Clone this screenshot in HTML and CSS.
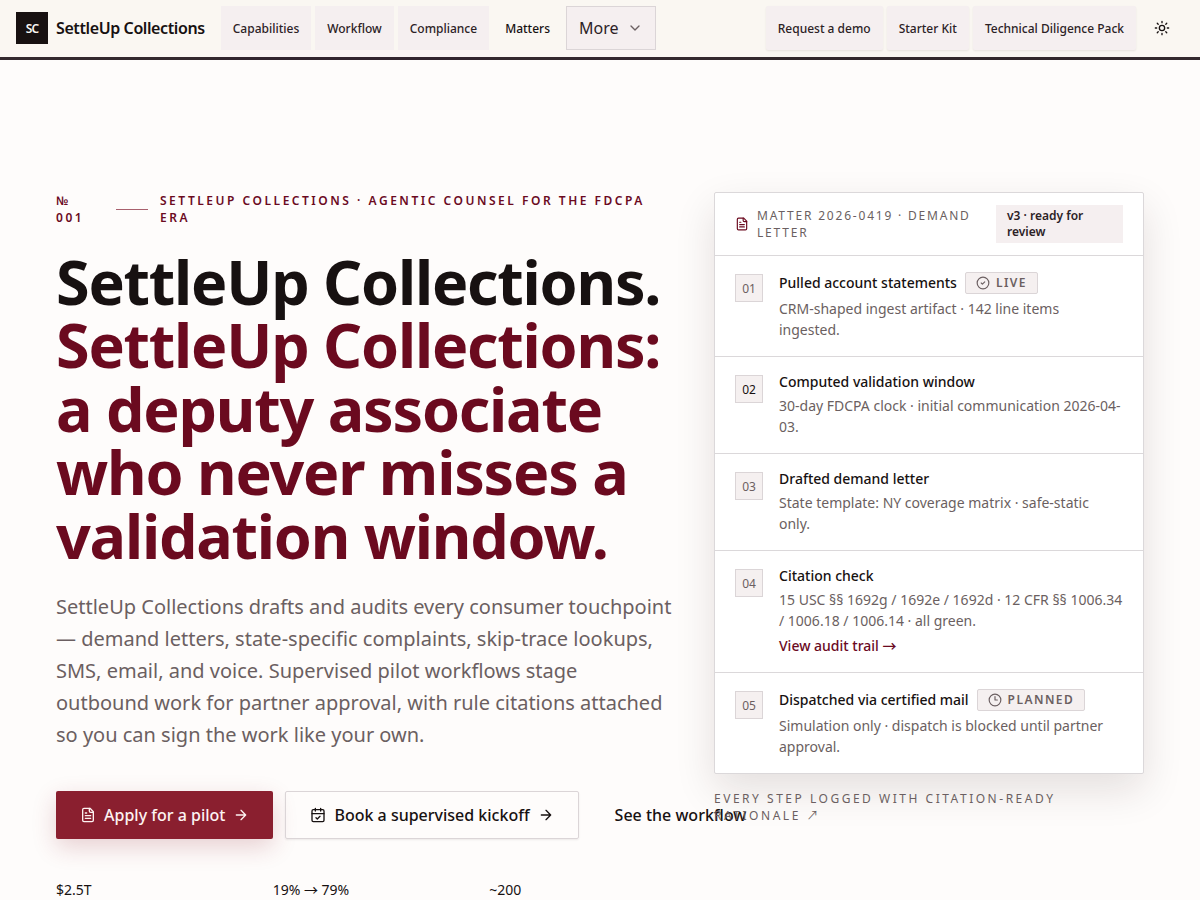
FILE: index.html
```html
<!DOCTYPE html>
<html lang="en">
<head>
  <meta charset="UTF-8" />
  <meta name="viewport" content="width=device-width, initial-scale=1.0" />
  <title>SettleUp Collections</title>
  <link rel="stylesheet" href="styles.css">
</head>
<body>
  <header class="site-header">
    <a href="#" class="brand">
      <span class="brand-mark">SC</span>
      <span class="brand-name">SettleUp Collections</span>
    </a>
    <nav class="main-nav">
      <a href="#" class="nav-link filled">Capabilities</a>
      <a href="#" class="nav-link filled">Workflow</a>
      <a href="#" class="nav-link filled">Compliance</a>
      <a href="#" class="nav-link">Matters</a>
      <button type="button" class="more-btn">More
        <svg class="icon chevron" viewBox="0 0 24 24"><path d="m6 9 6 6 6-6"/></svg>
      </button>
    </nav>
    <div class="header-actions">
      <a href="#" class="action-link">Request a demo</a>
      <a href="#" class="action-link">Starter Kit</a>
      <a href="#" class="action-link">Technical Diligence Pack</a>
      <button type="button" class="theme-btn" aria-label="Toggle theme">
        <svg class="icon" viewBox="0 0 24 24"><circle cx="12" cy="12" r="4"/><path d="M12 2v2M12 20v2M4.9 4.9l1.4 1.4M17.7 17.7l1.4 1.4M2 12h2M20 12h2M6.3 17.7l-1.4 1.4M19.1 4.9l-1.4 1.4"/></svg>
      </button>
    </div>
  </header>

  <main class="hero">
    <section class="hero-copy">
      <div class="eyebrow">
        <span>№ 001</span>
        <span class="eyebrow-line"></span>
        <span>SettleUp Collections · Agentic counsel for the FDCPA era</span>
      </div>
      <h1>SettleUp Collections. <span class="accent">SettleUp Collections: a deputy associate who never misses a validation window.</span></h1>
      <p class="lead">SettleUp Collections drafts and audits every consumer touchpoint — demand letters, state-specific complaints, skip-trace lookups, SMS, email, and voice. Supervised pilot workflows stage outbound work for partner approval, with rule citations attached so you can sign the work like your own.</p>
      <div class="cta-row">
        <a href="#" class="btn btn-primary">
          <svg class="icon" viewBox="0 0 24 24"><path d="M15 2H6a2 2 0 0 0-2 2v16a2 2 0 0 0 2 2h12a2 2 0 0 0 2-2V7Z"/><path d="M14 2v4a2 2 0 0 0 2 2h4M10 9H8M16 13H8M16 17H8"/></svg>
          Apply for a pilot
          <svg class="icon" viewBox="0 0 24 24"><path d="M5 12h14M12 5l7 7-7 7"/></svg>
        </a>
        <a href="#" class="btn btn-outline">
          <svg class="icon" viewBox="0 0 24 24"><path d="M8 2v4M16 2v4M3 10h18M9 16l2 2 4-4"/><rect x="3" y="4" width="18" height="18" rx="2"/></svg>
          Book a supervised kickoff
          <svg class="icon" viewBox="0 0 24 24"><path d="M5 12h14M12 5l7 7-7 7"/></svg>
        </a>
        <a href="#" class="btn btn-ghost">See the workflow</a>
      </div>
      <div class="stats">
        <span>$2.5T</span>
        <span>19% <span class="arrow">→</span> 79%</span>
        <span>~200</span>
      </div>
    </section>

    <aside class="matter">
      <div class="matter-card">
        <div class="matter-head">
          <svg class="icon" viewBox="0 0 24 24"><path d="M15 2H6a2 2 0 0 0-2 2v16a2 2 0 0 0 2 2h12a2 2 0 0 0 2-2V7Z"/><path d="M14 2v4a2 2 0 0 0 2 2h4M10 9H8M16 13H8M16 17H8"/></svg>
          <span class="matter-title">Matter 2026-0419 · Demand letter</span>
          <span class="version">v3 · ready for review</span>
        </div>
        <ol class="steps">
          <li class="step">
            <span class="step-no">01</span>
            <div class="step-body">
              <div class="step-title">Pulled account statements
                <span class="tag"><svg class="icon" viewBox="0 0 24 24"><circle cx="12" cy="12" r="10"/><path d="m9 12 2 2 4-4"/></svg>Live</span>
              </div>
              <p>CRM-shaped ingest artifact · 142 line items ingested.</p>
            </div>
          </li>
          <li class="step">
            <span class="step-no current">02</span>
            <div class="step-body">
              <div class="step-title">Computed validation window</div>
              <p>30-day FDCPA clock · initial communication 2026-04-03.</p>
            </div>
          </li>
          <li class="step">
            <span class="step-no">03</span>
            <div class="step-body">
              <div class="step-title">Drafted demand letter</div>
              <p>State template: NY coverage matrix · safe-static only.</p>
            </div>
          </li>
          <li class="step">
            <span class="step-no">04</span>
            <div class="step-body">
              <div class="step-title">Citation check</div>
              <p>15 USC §§ 1692g / 1692e / 1692d · 12 CFR §§ 1006.34 / 1006.18 / 1006.14 · all green.</p>
              <a href="#" class="audit-link">View audit trail <span class="arrow">→</span></a>
            </div>
          </li>
          <li class="step">
            <span class="step-no">05</span>
            <div class="step-body">
              <div class="step-title">Dispatched via certified mail
                <span class="tag"><svg class="icon" viewBox="0 0 24 24"><circle cx="12" cy="12" r="10"/><path d="M12 6v6h4"/></svg>Planned</span>
              </div>
              <p>Simulation only · dispatch is blocked until partner approval.</p>
            </div>
          </li>
        </ol>
      </div>
      <p class="matter-note">Every step logged with citation-ready rationale <span class="arrow">↗</span></p>
    </aside>
  </main>
</body>
</html>
```
FILE: styles.css
```css
* { margin: 0; padding: 0; box-sizing: border-box; }
body {
  background: #fefcfb;
  color: #171111;
  font-family: "Noto Sans", sans-serif;
  font-size: 14px;
}
a { color: inherit; text-decoration: none; }
button { font-family: inherit; color: inherit; cursor: pointer; }
.icon {
  width: 16px;
  height: 16px;
  flex: none;
  fill: none;
  stroke: currentColor;
  stroke-width: 2;
  stroke-linecap: round;
  stroke-linejoin: round;
}
.arrow { font-family: "Noto Sans CJK JP", sans-serif; line-height: 1; }

/* header */
.site-header {
  display: flex;
  align-items: center;
  padding: 6px 16px 7px;
  background: #faf7f2;
  border-bottom: 3px solid #33292d;
  white-space: nowrap;
}
.brand {
  display: flex;
  align-items: center;
  gap: 8px;
  margin-right: 16px;
}
.brand-mark {
  display: grid;
  place-items: center;
  width: 32px;
  height: 32px;
  background: #171111;
  color: #faf7f2;
  font-size: 12px;
  font-weight: 600;
  letter-spacing: -1px;
}
.brand-name {
  font-size: 16px;
  font-weight: 600;
  letter-spacing: -0.025em;
}
.main-nav {
  display: flex;
  gap: 4px;
}
.nav-link, .action-link {
  display: flex;
  align-items: center;
  height: 44px;
  padding: 0 12px;
  font-size: 12px;
  font-weight: 500;
}
.nav-link.filled { background: #f5eff0; color: #2c2226; }
.more-btn {
  display: flex;
  align-items: center;
  gap: 8px;
  height: 44px;
  padding: 0 12px;
  border: 1px solid #dbd5d7;
  background: #f5eff0;
  color: #2c2226;
  font-size: 16px;
}
.chevron { color: #6b6062; }
.header-actions {
  display: flex;
  align-items: center;
  gap: 4px;
  margin-left: auto;
}
.action-link {
  border-radius: 2px;
  background: #f5eff0;
  color: #2c2226;
  box-shadow: 0 1px 2px rgba(23, 17, 17, 0.08);
}
.theme-btn {
  display: grid;
  place-items: center;
  width: 44px;
  height: 44px;
  border: none;
  background: none;
}

/* hero */
.hero {
  display: grid;
  grid-template-columns: minmax(0, 1fr) 430px;
  gap: 40px;
  align-items: start;
  padding: 132px 56px 0;
}
.eyebrow {
  display: flex;
  align-items: center;
  gap: 12px;
  color: #6b0a1f;
  font-size: 12px;
  font-weight: 600;
  line-height: 17px;
  letter-spacing: 0.21em;
  text-transform: uppercase;
}
.eyebrow-line {
  flex: 0 0 32px;
  height: 1px;
  background: #a8606d;
}
h1 {
  margin: 24px 0;
  font-size: 61px;
  font-weight: 700;
  line-height: 1.04;
  letter-spacing: -0.02em;
}
.accent { color: #6b0a1f; }
.lead {
  color: #6b5f61;
  font-size: 20px;
  line-height: 32px;
}
.cta-row {
  display: flex;
  gap: 12px;
  margin: 40px 0;
}
.btn {
  display: flex;
  flex: none;
  align-items: center;
  gap: 8px;
  height: 48px;
  padding: 0 24px;
  border-radius: 2px;
  font-size: 16px;
  font-weight: 500;
  white-space: nowrap;
}
.btn-primary {
  background: #8a1f2f;
  color: #fdf3f2;
  box-shadow: 0 8px 24px rgba(138, 31, 47, 0.2);
}
.btn-outline {
  border: 1px solid #dbd5d7;
  box-shadow: 0 1px 2px rgba(23, 17, 17, 0.08);
}
.stats {
  display: grid;
  grid-template-columns: repeat(3, 1fr);
  gap: 32px;
  line-height: 21px;
}

/* matter card */
.matter-card {
  border: 1px solid #dbd8da;
  border-radius: 2px;
  background: #fff;
  box-shadow: 0 16px 40px rgba(43, 20, 20, 0.12);
}
.matter-head {
  display: flex;
  align-items: center;
  gap: 8px;
  padding: 12px 20px;
  color: #6b5f61;
  font-size: 12px;
}
.matter-head .icon {
  width: 14px;
  height: 14px;
  color: #6b0a1f;
}
.matter-title {
  flex: 1;
  line-height: 17px;
  letter-spacing: 0.15em;
  text-transform: uppercase;
}
.version {
  flex: 0 0 127px;
  padding: 3px 11px;
  background: #f5eff0;
  color: #2c2226;
  font-weight: 600;
  line-height: 16px;
}
.steps { list-style: none; }
.step {
  display: flex;
  gap: 16px;
  padding: 16px 20px;
  border-top: 1px solid #dbd8da;
}
.step-no {
  display: grid;
  place-items: center;
  flex: none;
  width: 28px;
  height: 28px;
  margin-top: 2px;
  border: 1px solid #dbd5d7;
  background: #f5f0f0;
  color: #6b5f61;
  font-size: 12px;
}
.step-no.current { color: #171111; }
.step-title {
  display: flex;
  align-items: center;
  gap: 8px;
  margin-bottom: 4px;
  font-weight: 500;
  line-height: 18px;
}
.tag {
  display: flex;
  align-items: center;
  gap: 6px;
  height: 22px;
  padding: 0 10px;
  border: 1px solid #dbd5d7;
  border-radius: 2px;
  background: #f5f0f0;
  color: #6b5f61;
  font-size: 12px;
  font-weight: 600;
  letter-spacing: 0.12em;
  text-transform: uppercase;
}
.tag .icon { width: 14px; height: 14px; }
.step p {
  color: #6b5f61;
  line-height: 21px;
}
.audit-link {
  display: block;
  margin-top: 4px;
  color: #6b0a1f;
  font-weight: 500;
  line-height: 21px;
}
.matter-note {
  margin-top: 16px;
  color: #6b5f61;
  font-size: 12px;
  line-height: 17px;
  letter-spacing: 0.21em;
  text-transform: uppercase;
}
```
